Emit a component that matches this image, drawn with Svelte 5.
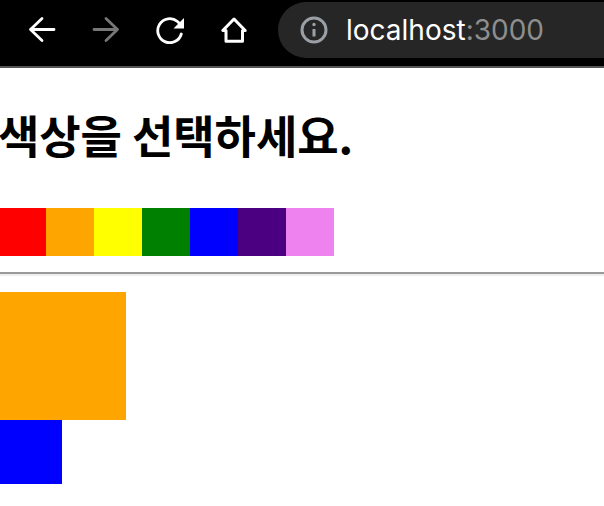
<script>
  const colors = ['red', 'orange', 'yellow', 'green', 'blue', 'indigo', 'violet'];
</script>

<div class="page">
  <header class="toolbar">
    <div class="nav">
      <svg class="icon back" viewBox="0 0 28 28" width="28" height="28">
        <path d="M26 13.500H2.500M14 2.500 2.500 13.500 14 24.500" />
      </svg>
      <svg class="icon forward" viewBox="0 0 28 28" width="28" height="28">
        <path d="M2 13.500H25.500M14 2.500 25.500 13.500 14 24.500" />
      </svg>
      <svg class="icon reload" viewBox="0 0 28 28" width="28" height="28">
        <path d="M25.300 18A12 12 0 1 1 21.500 5.500L25 9" />
        <path class="solid" d="M28 2V12.500H17.500Z" />
      </svg>
      <svg class="icon home" viewBox="0 0 28 28" width="28" height="28">
        <path d="M14 3 2.800 14.500H6V25.200H22.500V14.500H25.200Z" />
      </svg>
    </div>
    <div class="address">
      <svg class="info" viewBox="0 0 28 28" width="28" height="28">
        <circle cx="14" cy="14" r="12" />
        <path d="M14 13V20.500" />
        <circle class="dot" cx="14" cy="8.500" r="1.700" />
      </svg>
      <span class="url">localhost<span class="port">:3000</span></span>
    </div>
  </header>

  <main>
    <h1>색상을 선택하세요.</h1>
    <div class="swatches">
      {#each colors as color}
        <button class="swatch" style="background: {color}" aria-label={color}></button>
      {/each}
    </div>
    <hr />
    <div class="large"></div>
    <div class="small"></div>
  </main>
</div>

<style>
  :global(body) {
    margin: 0;
    background: white;
  }

  .page {
    width: 604px;
    height: 506px;
    overflow: hidden;
    font-family: 'Inter', 'Noto Sans CJK KR', sans-serif;
  }

  .toolbar {
    height: 68px;
    box-sizing: border-box;
    padding: 2px 0 8px 28px;
    background: #000;
    border-bottom: 2px solid #555;
    display: flex;
    align-items: center;
  }

  .nav {
    display: flex;
    gap: 36px;
    width: 250px;
    flex: none;
  }

  .icon {
    fill: none;
    stroke: #fff;
    stroke-width: 2.800;
    stroke-linecap: round;
    stroke-linejoin: round;
  }

  .forward {
    stroke: #777;
  }

  .solid {
    fill: #fff;
    stroke: none;
  }

  .home {
    stroke-width: 3;
  }

  .address {
    flex: 1;
    height: 56px;
    background: #262626;
    border-radius: 28px 0 0 28px;
    display: flex;
    align-items: center;
    padding-left: 22px;
    gap: 18px;
  }

  .info {
    fill: none;
    stroke: #9aa0a6;
    stroke-width: 3;
  }

  .info .dot {
    fill: #9aa0a6;
    stroke: none;
  }

  .url {
    color: #fff;
    font-size: 28px;
    line-height: 1;
  }

  .port {
    color: #8e8e8e;
  }

  h1 {
    margin: 0 0 0 -2px;
    padding-top: 39px;
    height: 99px;
    box-sizing: border-box;
    font-size: 45px;
    line-height: 56px;
    font-weight: 700;
    color: #000;
    letter-spacing: -0.1px;
    white-space: nowrap;
    font-family: 'Noto Sans CJK KR', sans-serif;
  }

  .swatches {
    display: flex;
    margin-top: 41px;
    margin-left: -2px;
  }

  .swatch {
    width: 48px;
    height: 48px;
    padding: 0;
    border: 0;
    display: block;
  }

  hr {
    margin: 16px 0;
    height: 2px;
    border: 0;
    background: #999;
    border-bottom: 2px solid #eee;
    box-sizing: content-box;
  }

  .large {
    width: 126px;
    height: 128px;
    background: orange;
  }

  .small {
    width: 62px;
    height: 64px;
    background: blue;
  }
</style>
